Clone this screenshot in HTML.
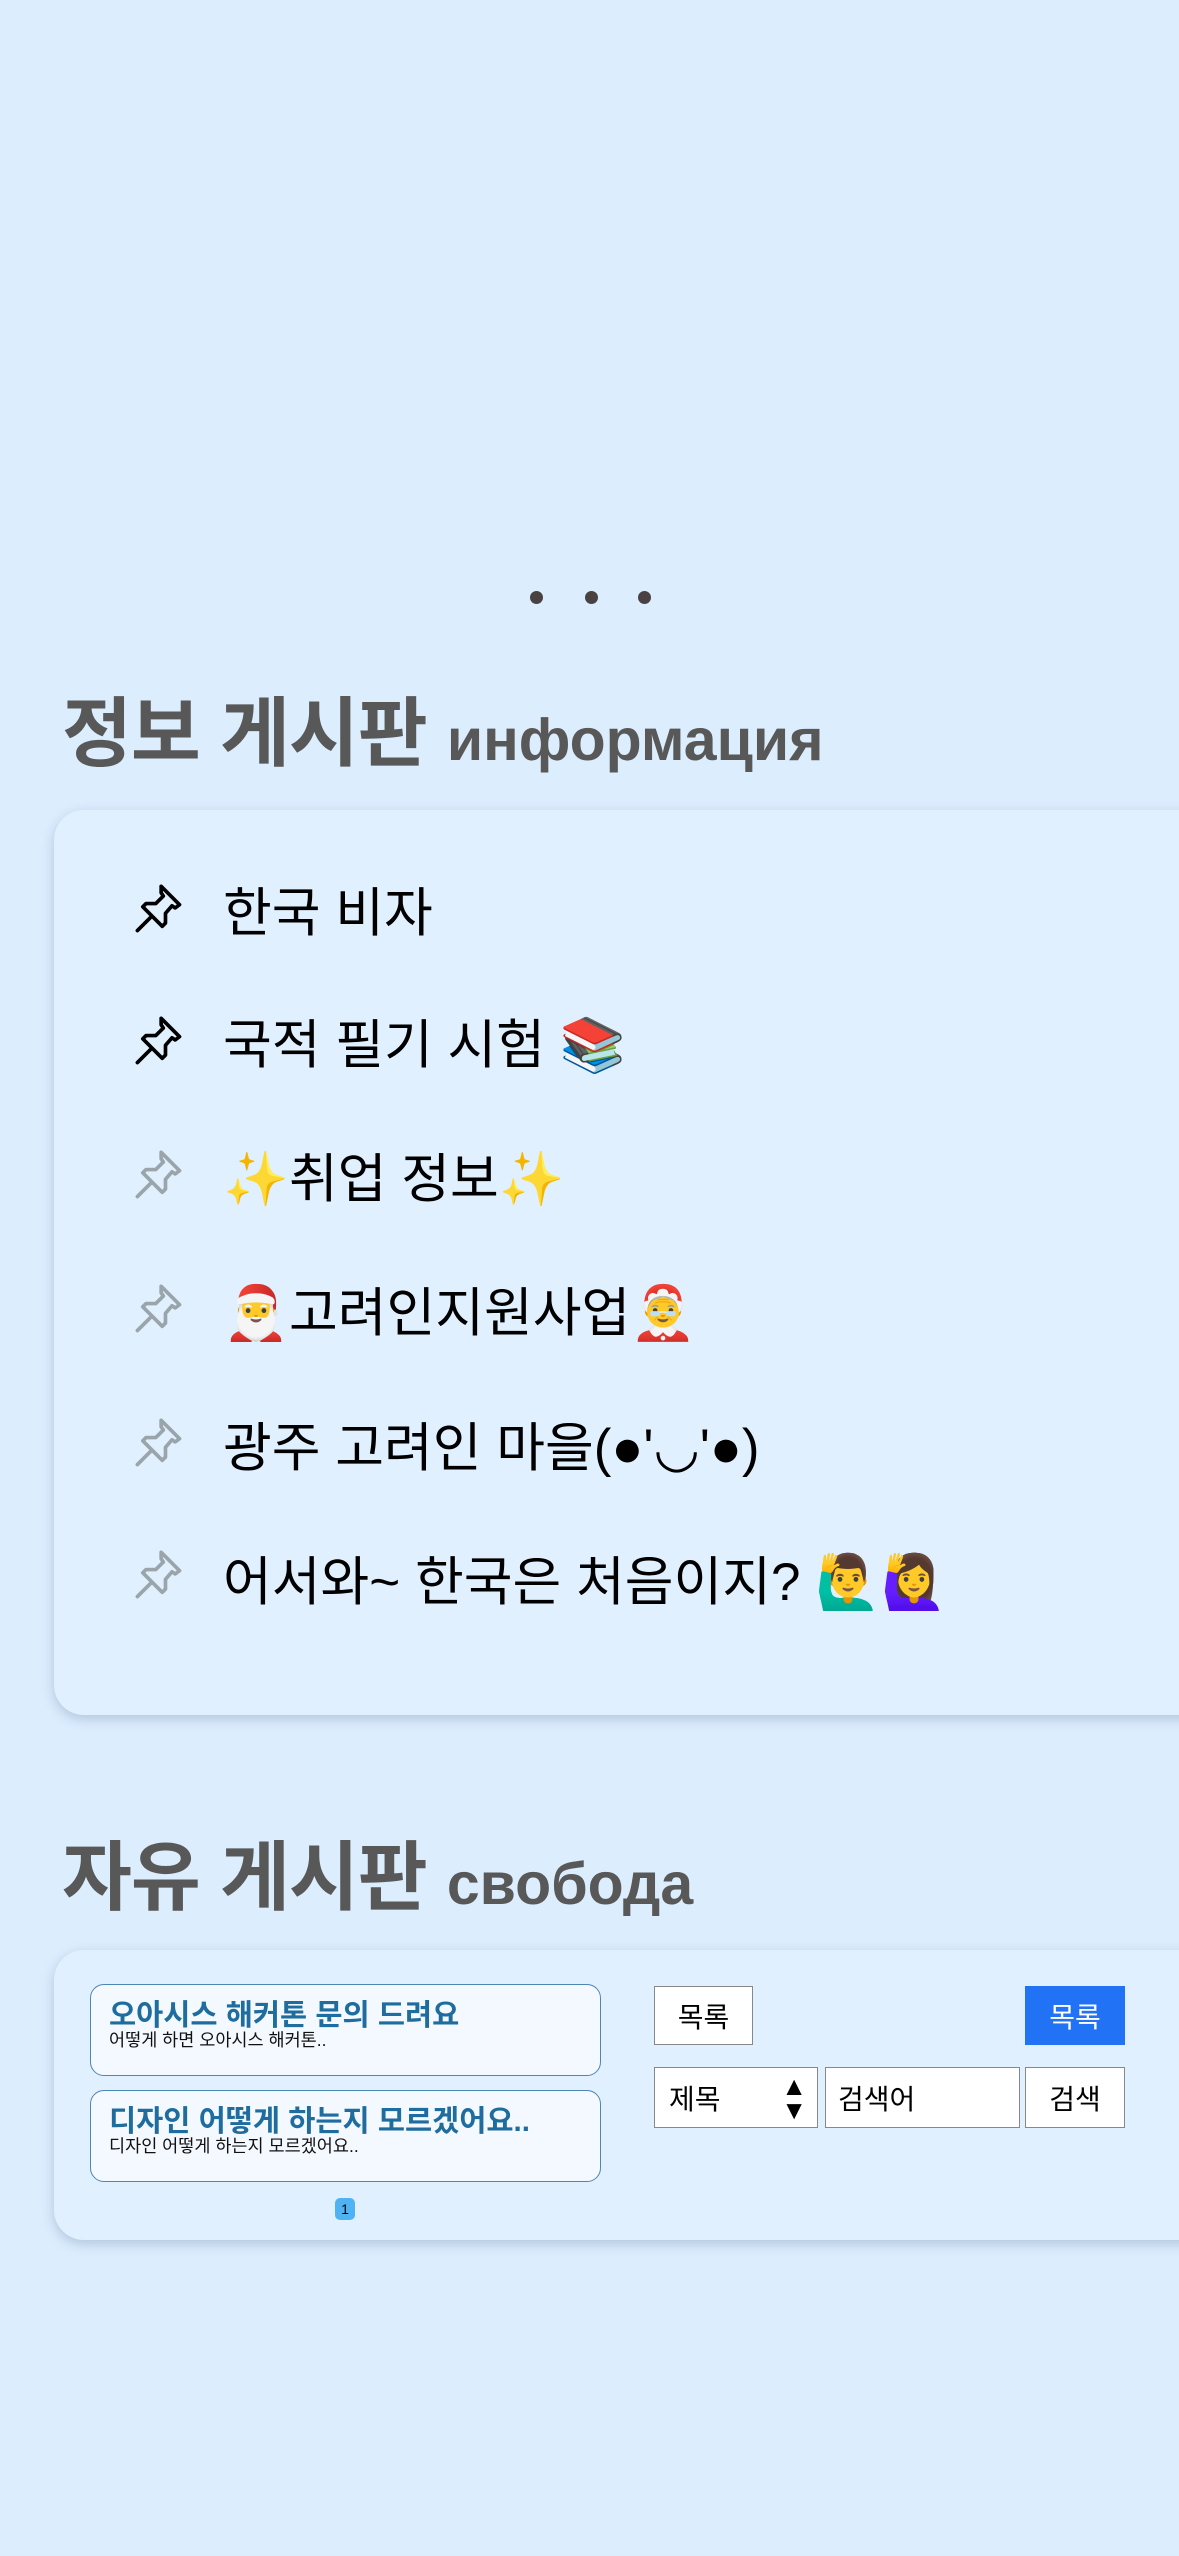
<!DOCTYPE html>
<html><head><meta charset="utf-8"><style>
html,body{margin:0;padding:0}
body{width:1179px;height:2556px;background:#dcedfe;position:relative;overflow:hidden;font-family:"Liberation Sans","Noto Sans CJK KR",sans-serif}
.a{position:absolute}
.dot{position:absolute;width:13px;height:13px;border-radius:50%;background:#4a4242;top:591px}
h2{position:absolute;left:62px;margin:0;font-weight:700;color:#585858;font-size:76px;line-height:90px;white-space:nowrap;letter-spacing:-1px}
h2 span{font-size:59px;letter-spacing:0}
.card{position:absolute;left:54px;width:1180px;background:#e1f0ff;border-radius:30px;box-shadow:0 4px 12px rgba(80,110,140,.3)}
.it{position:absolute;left:223px;font-size:53px;line-height:70px;color:#000;white-space:nowrap}
.pin{position:absolute;left:132px;width:54px;height:54px}
.post{position:absolute;left:90px;width:511px;height:92px;border:1.5px solid #4c86b3;border-radius:14px;background:#f3f9ff;box-sizing:border-box}
.post b{position:absolute;left:18px;top:7px;font-size:29.5px;color:#1f6c9f;white-space:nowrap}
.post i{position:absolute;left:18px;top:42px;font-style:normal;font-size:17.5px;color:#111;white-space:nowrap}
.btn{position:absolute;box-sizing:border-box;border:1.5px solid #888;background:#fff;font-size:28px;display:flex;align-items:center;justify-content:center}
</style></head><body>
<div class="dot" style="left:530px"></div><div class="dot" style="left:585px"></div><div class="dot" style="left:638px"></div>

<h2 style="top:690px">정보 게시판 <span>информация</span></h2>
<div class="card" style="top:810px;height:905px"></div>

<svg width="0" height="0" style="position:absolute"><defs><g id="p" fill="none" stroke-width="3.4" stroke-linejoin="round" stroke-linecap="round"><path d="M27 4 L44 21 L40 24 L37 22 L31 29 L31 38 L28 41 L10 23 L13 20 L22 20 L29 13 L27 10 Z"/><path d="M18 32 L5 45"/></g></defs></svg>

<svg class="pin" style="top:882px" viewBox="0 0 50 50"><use href="#p" stroke="#000"/></svg>
<div class="it" style="top:879px">한국 비자</div>
<svg class="pin" style="top:1014px" viewBox="0 0 50 50"><use href="#p" stroke="#000"/></svg>
<div class="it" style="top:1011px">국적 필기 시험 📚</div>
<svg class="pin" style="top:1148px" viewBox="0 0 50 50"><use href="#p" stroke="#9aa5ab"/></svg>
<div class="it" style="top:1145px">✨취업 정보✨</div>
<svg class="pin" style="top:1282px" viewBox="0 0 50 50"><use href="#p" stroke="#9aa5ab"/></svg>
<div class="it" style="top:1279px">🎅고려인지원사업🤶</div>
<svg class="pin" style="top:1416px" viewBox="0 0 50 50"><use href="#p" stroke="#9aa5ab"/></svg>
<div class="it" style="top:1414px">광주 고려인 마을(●'◡'●)</div>
<svg class="pin" style="top:1548px" viewBox="0 0 50 50"><use href="#p" stroke="#9aa5ab"/></svg>
<div class="it" style="top:1548px">어서와~ 한국은 처음이지? 🙋‍♂️🙋‍♀️</div>

<h2 style="top:1834px">자유 게시판 <span>свобода</span></h2>
<div class="card" style="top:1950px;height:290px"></div>

<div class="post" style="top:1984px"><b>오아시스 해커톤 문의 드려요</b><i>어떻게 하면 오아시스 해커톤..</i></div>
<div class="post" style="top:2090px"><b>디자인 어떻게 하는지 모르겠어요..</b><i>디자인 어떻게 하는지 모르겠어요..</i></div>
<div class="a" style="left:335px;top:2198px;width:20px;height:22px;border-radius:5px;background:#4fb3f3;font-size:14px;text-align:center;line-height:22px">1</div>

<div class="btn" style="left:654px;top:1986px;width:99px;height:59px">목록</div>
<div class="btn" style="left:1025px;top:1986px;width:100px;height:59px;background:#2272f6;border-color:#2272f6;color:#fff">목록</div>
<div class="btn" style="left:654px;top:2067px;width:164px;height:61px;justify-content:flex-start;padding-left:14px">제목<span style="position:absolute;right:10px;top:6px;font-size:26px;line-height:24px">▲<br>▼</span></div>
<div class="btn" style="left:825px;top:2067px;width:195px;height:61px;justify-content:flex-start;padding-left:12px">검색어</div>
<div class="btn" style="left:1025px;top:2067px;width:100px;height:61px">검색</div>
</body></html>
